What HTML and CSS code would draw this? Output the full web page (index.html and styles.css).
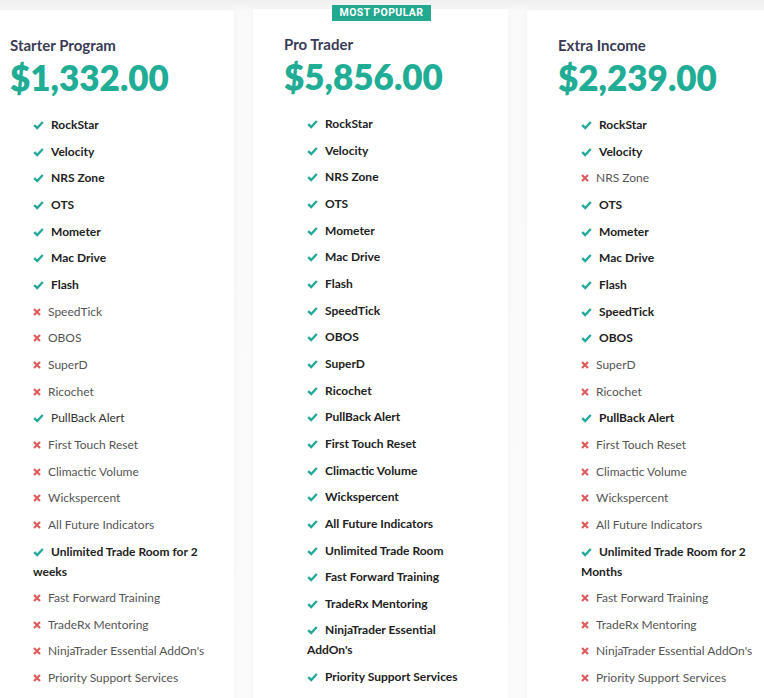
FILE: index.html
```html
<!DOCTYPE html>
<html lang="en">
<head>
    <meta charset="UTF-8">
    <meta name="viewport" content="width=device-width, initial-scale=1.0">
    <title>Pricing Plans</title>
    <link rel="stylesheet" href="styles.css">
</head>
<body>
    <div class="plans">
        <div class="plan">
            <h3 class="plan-name">Starter Program</h3>
            <div class="plan-price">$1,332.00</div>
            <ul class="features">
                <li class="yes">RockStar</li>
                <li class="yes">Velocity</li>
                <li class="yes">NRS Zone</li>
                <li class="yes">OTS</li>
                <li class="yes">Mometer</li>
                <li class="yes">Mac Drive</li>
                <li class="yes">Flash</li>
                <li class="no">SpeedTick</li>
                <li class="no">OBOS</li>
                <li class="no">SuperD</li>
                <li class="no">Ricochet</li>
                <li class="yes light">PullBack Alert</li>
                <li class="no">First Touch Reset</li>
                <li class="no">Climactic Volume</li>
                <li class="no">Wickspercent</li>
                <li class="no">All Future Indicators</li>
                <li class="yes">Unlimited Trade Room for 2 weeks</li>
                <li class="no">Fast Forward Training</li>
                <li class="no">TradeRx Mentoring</li>
                <li class="no">NinjaTrader Essential AddOn's</li>
                <li class="no">Priority Support Services</li>
            </ul>
        </div>

        <div class="plan popular">
            <span class="badge">MOST POPULAR</span>
            <h3 class="plan-name">Pro Trader</h3>
            <div class="plan-price">$5,856.00</div>
            <ul class="features">
                <li class="yes">RockStar</li>
                <li class="yes">Velocity</li>
                <li class="yes">NRS Zone</li>
                <li class="yes">OTS</li>
                <li class="yes">Mometer</li>
                <li class="yes">Mac Drive</li>
                <li class="yes">Flash</li>
                <li class="yes">SpeedTick</li>
                <li class="yes">OBOS</li>
                <li class="yes">SuperD</li>
                <li class="yes">Ricochet</li>
                <li class="yes">PullBack Alert</li>
                <li class="yes">First Touch Reset</li>
                <li class="yes">Climactic Volume</li>
                <li class="yes">Wickspercent</li>
                <li class="yes">All Future Indicators</li>
                <li class="yes">Unlimited Trade Room</li>
                <li class="yes">Fast Forward Training</li>
                <li class="yes">TradeRx Mentoring</li>
                <li class="yes">NinjaTrader Essential AddOn's</li>
                <li class="yes">Priority Support Services</li>
            </ul>
        </div>

        <div class="plan">
            <h3 class="plan-name">Extra Income</h3>
            <div class="plan-price">$2,239.00</div>
            <ul class="features">
                <li class="yes">RockStar</li>
                <li class="yes">Velocity</li>
                <li class="no">NRS Zone</li>
                <li class="yes">OTS</li>
                <li class="yes">Mometer</li>
                <li class="yes">Mac Drive</li>
                <li class="yes">Flash</li>
                <li class="yes">SpeedTick</li>
                <li class="yes">OBOS</li>
                <li class="no">SuperD</li>
                <li class="no">Ricochet</li>
                <li class="yes">PullBack Alert</li>
                <li class="no">First Touch Reset</li>
                <li class="no">Climactic Volume</li>
                <li class="no">Wickspercent</li>
                <li class="no">All Future Indicators</li>
                <li class="yes">Unlimited Trade Room for 2 Months</li>
                <li class="no">Fast Forward Training</li>
                <li class="no">TradeRx Mentoring</li>
                <li class="no">NinjaTrader Essential AddOn's</li>
                <li class="no">Priority Support Services</li>
            </ul>
        </div>
    </div>
</body>
</html>
```

FILE: styles.css
```css
body {
    margin: 0;
    font-family: Lato, "Noto Sans", sans-serif;
    background: linear-gradient(#efefef, #fafafa 12px, #fbfbfb);
    overflow: hidden;
}

.plans {
    display: flex;
    gap: 19px;
    margin-left: -21px;
    padding-top: 10px;
}

.plan {
    position: relative;
    flex: 0 0 255px;
    box-sizing: border-box;
    padding: 25px 26px 0 31px;
    height: 700px;
    background: #fff;
    box-shadow: 0 0 8px rgba(0, 0, 0, 0.035);
}

.popular {
    margin-top: -1px;
}

.badge {
    position: absolute;
    top: -4px;
    left: 79px;
    width: 99px;
    height: 16px;
    line-height: 16px;
    background-color: #22a98f;
    color: #fff;
    font-family: Roboto, sans-serif;
    font-size: 10.5px;
    font-weight: 700;
    letter-spacing: 0.4px;
    text-align: center;
}

.plan-name {
    margin: 0;
    font-size: 15px;
    line-height: 20px;
    font-weight: 700;
    color: #393b56;
}

.plan-price {
    margin-top: 0;
    font-size: 35px;
    line-height: 44px;
    font-weight: 800;
    color: #21ad95;
}

.features {
    list-style: none;
    margin: 16px 0 0;
    padding: 0 0 0 23px;
}

.features li {
    font-size: 12px;
    line-height: 20px;
    margin-bottom: 6.67px;
    color: #222;
    font-weight: 700;
}

.features li::before {
    display: inline-block;
    vertical-align: -1px;
    margin-right: 7px;
    content: "";
    background-repeat: no-repeat;
    background-position: center;
}

.features li.yes::before {
    width: 11px;
    height: 10px;
    background-image: url("data:image/svg+xml,%3Csvg xmlns='http://www.w3.org/2000/svg' viewBox='0 0 11 10'%3E%3Cpath d='M1.2 5.2 L4.2 8 L9.8 2' fill='none' stroke='%2326a99a' stroke-width='2.4'/%3E%3C/svg%3E");
}

.features li.no {
    font-weight: 400;
    color: #555;
}

.features li.light {
    font-weight: 400;
    color: #333;
}

.features li.no::before {
    width: 8px;
    height: 10px;
    background-image: url("data:image/svg+xml,%3Csvg xmlns='http://www.w3.org/2000/svg' viewBox='0 0 8 10'%3E%3Cpath d='M1 2 L7 8 M7 2 L1 8' fill='none' stroke='%23e05c5c' stroke-width='2.2'/%3E%3C/svg%3E");
}
```
